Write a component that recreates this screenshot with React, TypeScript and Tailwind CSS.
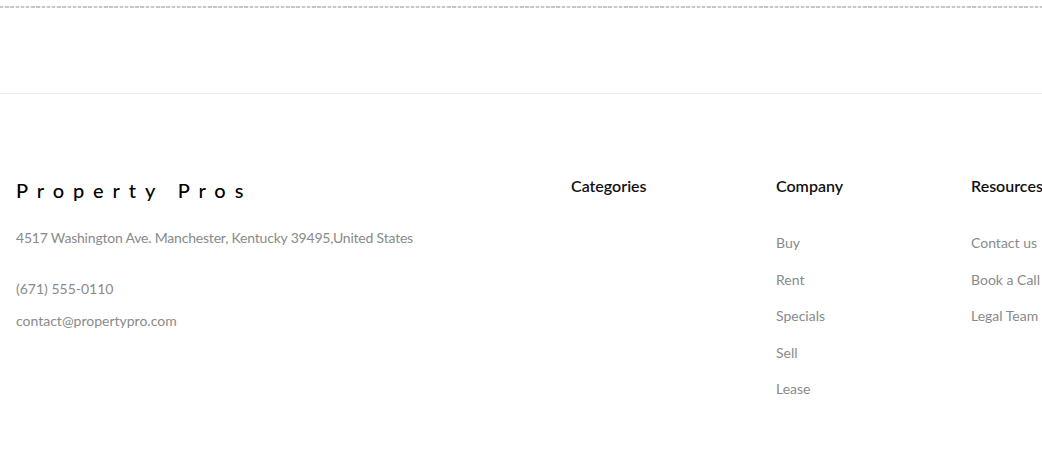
export default function App() {
    const company = ["Buy", "Rent", "Specials", "Sell", "Lease"]
    const resources = ["Contact us", "Book a Call", "Legal Team"]

    return (
        <div className="w-[1042px] h-[473px] bg-white overflow-hidden font-['Lato',sans-serif]">
            <div className="pt-[6px]">
                <div className="h-[2px] w-full bg-[repeating-linear-gradient(90deg,#c6c6c6_0px,#c6c6c6_3.5px,#f4f4f4_3.5px,#f4f4f4_5.2px)]" />
            </div>
            <div className="h-[86px] border-b border-[#ececec]" />

            <footer className="flex pl-[16px] pt-[82px]">
                <div className="w-[555px] shrink-0">
                    <h2 className="text-[20px] leading-[28px] tracking-[8.9px] text-black font-medium">Property Pros</h2>
                    <p className="mt-[24px] text-[14px] leading-[20px] tracking-[-0.2px] text-[#8a8a8a]">
                        4517 Washington Ave. Manchester, Kentucky 39495,United States
                    </p>
                    <p className="mt-[31px] text-[14px] leading-[20px] text-[#8a8a8a]">(671) 555-0110</p>
                    <p className="mt-[12px] text-[14px] leading-[20px] text-[#8a8a8a]">contact@propertypro.com</p>
                </div>

                <div className="w-[205px] shrink-0">
                    <h3 className="text-[16px] leading-[20px] font-semibold text-[#111]">Categories</h3>
                </div>

                <div className="w-[195px] shrink-0">
                    <h3 className="text-[16px] leading-[20px] font-semibold text-[#111]">Company</h3>
                    <ul className="mt-[37px] flex flex-col gap-[16.5px]">
                        {company.map((c) => (
                            <li key={c} className="text-[14px] leading-[20px] text-[#8a8a8a]">{c}</li>
                        ))}
                    </ul>
                </div>

                <div className="w-[195px] shrink-0">
                    <h3 className="text-[16px] leading-[20px] font-semibold text-[#111] whitespace-nowrap">Resources</h3>
                    <ul className="mt-[37px] flex flex-col gap-[16.5px]">
                        {resources.map((r) => (
                            <li key={r} className="text-[14px] leading-[20px] text-[#8a8a8a] whitespace-nowrap">{r}</li>
                        ))}
                    </ul>
                </div>
            </footer>
        </div>
    )
}
